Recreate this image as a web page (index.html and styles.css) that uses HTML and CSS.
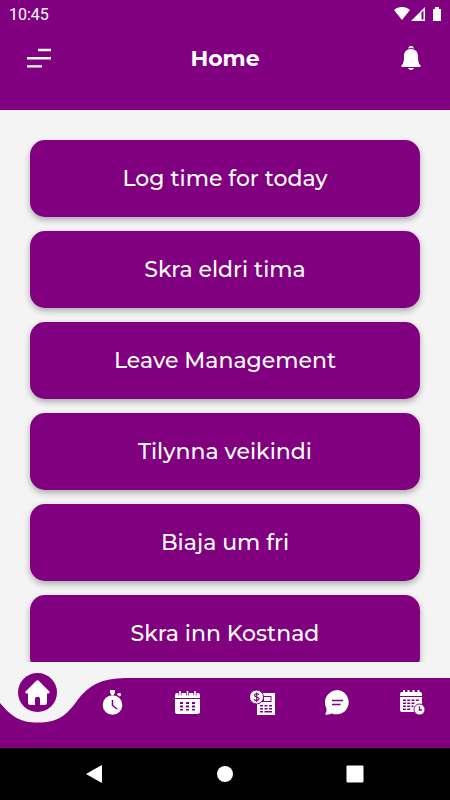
FILE: index.html
```html
<!DOCTYPE html>
<html lang="is">
<head>
  <meta charset="UTF-8" />
  <meta name="viewport" content="width=device-width, initial-scale=1.0" />
  <title>Home</title>
  <link rel="stylesheet" href="styles.css">
</head>
<body>
  <header>
    <div class="status">
      <span>10:45</span>
      <svg width="50" height="16" viewBox="0 0 50 16" fill="#fff" aria-hidden="true">
        <path d="M2 4C6 0 14 0 18 4L10 14Z" />
        <path fill-rule="evenodd" d="M33 1V15H19ZM29.500 6.500V13.500H31.500V4.500Z" />
        <path d="M41 3H43V1H47V3H49V15H41Z" />
      </svg>
    </div>
    <div class="topbar">
      <button class="icon-btn" aria-label="Menu">
        <svg width="24" height="24" viewBox="0 0 24 24" stroke="#fff" stroke-width="2.4">
          <path d="M11 4H24M0 12.2H24M0 20.4H15" />
        </svg>
      </button>
      <h1>Home</h1>
      <button class="icon-btn" aria-label="Notifications">
        <svg width="24" height="24" viewBox="0 0 24 24" fill="#fff">
          <path d="M9 2.400Q9.700 0 12 0T15 2.400Q12 1.600 9 2.400Z" />
          <path d="M12 3C16.500 3 19 6 19 10C19 15 19.500 18 21.500 19.500V21H2.500V19.500C4.500 18 5 15 5 10C5 6 7.500 3 12 3Z" />
          <path d="M9 22H15Q14 24 12 24T9 22Z" />
        </svg>
      </button>
    </div>
  </header>

  <main>
    <button class="card">Log time for today</button>
    <button class="card">Skra eldri tima</button>
    <button class="card">Leave Management</button>
    <button class="card">Tilynna veikindi</button>
    <button class="card">Biaja um fri</button>
    <button class="card">Skra inn Kostnad</button>
  </main>

  <nav class="tabs">
    <svg class="tabs-bg" viewBox="0 0 450 86" preserveAspectRatio="none" aria-hidden="true">
      <path fill="#800080" d="M0 41C12 55 20 60.500 38 60.500C58 60.500 66 54 78 37.500C92 20 105 16 130 16H450V86H0Z" />
    </svg>
    <a href="#" class="tab active" aria-label="Home">
      <svg width="25" height="25" viewBox="0 0 25 25" fill="#fff">
        <path d="M11.500 0.600Q12.500 0 13.500 0.600L24.500 11.500Q25.300 13.300 23.500 13.500H22V22.500Q22 25 19.500 25H15V18.500Q15 17 13.500 17H11.500Q10 17 10 18.500V25H5.500Q3 25 3 22.500V13.500H1.500Q-0.300 13.300 0.500 11.500Z" />
      </svg>
    </a>
    <a href="#" class="tab" aria-label="Timer">
      <svg width="25" height="25" viewBox="0 0 25 25" fill="#fff">
        <path d="M10 0H15V3.500H14V5H11V3.500H10ZM18 3L20.800 3.200L21 5.500L19.500 6.500L17 4.500Z" />
        <circle cx="12.500" cy="15" r="9.800" />
        <path d="M12.500 10V15.500L17 19" fill="none" stroke="#800080" stroke-width="1.500" />
      </svg>
    </a>
    <a href="#" class="tab" aria-label="Calendar">
      <svg width="25" height="25" viewBox="0 0 25 25" fill="#fff">
        <path d="M0 8V5Q0 3 2 3H3.500V5.500H4.200V1H5.800V5.500H6.500V3H11V5.500H11.700V1H13.300V5.500H14V3H18.500V5.500H19.200V1H20.800V5.500H21.500V3H23Q25 3 25 5V8Z" />
        <path fill-rule="evenodd" d="M0 9H25V21.500Q25 24 22.500 24H2.500Q0 24 0 21.500ZM5 12V14H8V12ZM11 12V14H14V12ZM17 12V14H20V12ZM5 15.500V17.500H8V15.500ZM11 15.500V17.500H14V15.500ZM17 15.500V17.500H20V15.500ZM5 19V20.500H8V19ZM11 19V20.500H14V19ZM17 19V20.500H20V19Z" />
      </svg>
    </a>
    <a href="#" class="tab" aria-label="Expenses">
      <svg width="25" height="25" viewBox="0 0 25 25" fill="#fff">
        <path fill-rule="evenodd" d="M7 3H25V25H7ZM12 6V12H21.500V6ZM10 15V16.500H13V15ZM14.500 15V16.500H17.500V15ZM19 15V16.500H22V15ZM10 18V19.500H13V18ZM14.500 18V19.500H17.500V18ZM19 18V19.500H22V18ZM10 21V22.500H13V21ZM14.500 21V22.500H22V21Z" />
        <path d="M14 7H20.500V11H14Z" />
        <circle cx="6.500" cy="7" r="7" stroke="#800080" stroke-width="1" />
        <path d="M9 4.800C8 3.200 4.500 3.500 4.500 5.300C4.500 7.500 9 6.500 9 8.800C9 10.800 5 11 4 9.200M6.700 2.500V12" fill="none" stroke="#800080" stroke-width="1.200" />
      </svg>
    </a>
    <a href="#" class="tab" aria-label="Messages">
      <svg width="25" height="25" viewBox="0 0 25 25" fill="#fff">
        <path d="M12.500 0A12.200 12.200 0 1 1 7 23.500Q3.500 25 0.500 24.500Q0 24.300 0.500 23.500Q1.800 21.500 1.500 18.500A12.500 12.500 0 0 1 12.500 0Z" />
        <path d="M7 10.500H18M7 14.500H15.500" stroke="#800080" stroke-width="1.600" />
      </svg>
    </a>
    <a href="#" class="tab" aria-label="Schedule">
      <svg width="25" height="25" viewBox="0 0 25 25" fill="#fff">
        <path d="M0 6V4Q0 2 2 2H3V0H5V2H7.500V0H9.500V2H12.500V0H14.500V2H17.500V0H19.500V2H20Q22 2 22 4V6Z" />
        <path fill-rule="evenodd" d="M0 7H22V22H2Q0 22 0 20ZM3 9.500V11H6V9.500ZM7.200 9.500V11H10.200V9.500ZM11.500 9.500V11H14.500V9.500ZM15.800 9.500V11H18.800V9.500ZM3 12.500V14H6V12.500ZM7.200 12.500V14H10.200V12.500ZM11.500 12.500V14H14.500V12.500ZM3 15.500V17H6V15.500ZM7.200 15.500V17H10.200V15.500ZM11.500 15.500V17H13.500V15.500ZM3 18.500V20H6V18.500ZM7.200 18.500V20H10.200V18.500Z" />
        <circle cx="19.500" cy="19.500" r="5.500" stroke="#800080" stroke-width="1" />
        <path d="M19.500 16.500V20H22" fill="none" stroke="#800080" stroke-width="1.300" />
      </svg>
    </a>
  </nav>

  <footer>
    <button class="sys" aria-label="Back">
      <svg width="18" height="18" viewBox="0 0 18 18" fill="#fff"><path d="M1 9L16 0.500Q17 0 17 1V17Q17 18 16 17.500Z" /></svg>
    </button>
    <button class="sys" aria-label="Home screen">
      <svg width="18" height="18" viewBox="0 0 18 18" fill="#fff"><circle cx="9" cy="9" r="8" /></svg>
    </button>
    <button class="sys" aria-label="Recent apps">
      <svg width="18" height="18" viewBox="0 0 18 18" fill="#fff"><rect x="0.500" y="0.500" width="17" height="17" rx="1" /></svg>
    </button>
  </footer>
</body>
</html>
```

FILE: styles.css
```css
* {
  box-sizing: border-box;
}
body {
  font-family: Montserrat, Inter, sans-serif;
  margin: 0;
  height: 100vh;
  display: flex;
  flex-direction: column;
  background-color: #f4f4f4;
}
button {
  border: none;
  padding: 0;
  background: none;
  font-family: inherit;
  color: white;
}
svg {
  display: block;
}
header {
  background: #800080;
  color: white;
  padding-bottom: 38px;
}
.status {
  display: flex;
  justify-content: space-between;
  align-items: center;
  height: 28px;
  padding: 0 8px 0 9px;
  font-family: Roboto, sans-serif;
  font-size: 16px;
}
.topbar {
  display: flex;
  justify-content: space-between;
  align-items: center;
  height: 44px;
  padding: 16px 27px 0;
}
h1 {
  margin: 0;
  padding-top: 2px;
  font-size: 22px;
  line-height: 28px;
  font-weight: 700;
}
main {
  flex: 1;
  min-height: 0;
  overflow: hidden;
  display: flex;
  flex-direction: column;
  gap: 14px;
  padding: 30px 30px 0;
}
.card {
  flex: none;
  height: 77px;
  border-radius: 15px;
  background: #800080;
  font-size: 22px;
  font-weight: 500;
  box-shadow: 0 3px 6px rgba(0, 0, 0, 0.3);
}
.tabs {
  position: relative;
  display: flex;
  height: 86px;
}
.tabs-bg {
  position: absolute;
  inset: 0;
  width: 100%;
  height: 100%;
}
.tab {
  position: relative;
  flex: 1;
  display: flex;
  justify-content: center;
  align-items: flex-start;
  padding-top: 28px;
}
.active {
  padding-top: 11px;
}
.active svg {
  box-sizing: content-box;
  padding: 7px;
  border-radius: 50%;
  background: #800080;
  overflow: visible;
}
footer {
  display: flex;
  justify-content: space-between;
  align-items: center;
  height: 52px;
  padding: 0 86px 0 85px;
  background: black;
}
```
